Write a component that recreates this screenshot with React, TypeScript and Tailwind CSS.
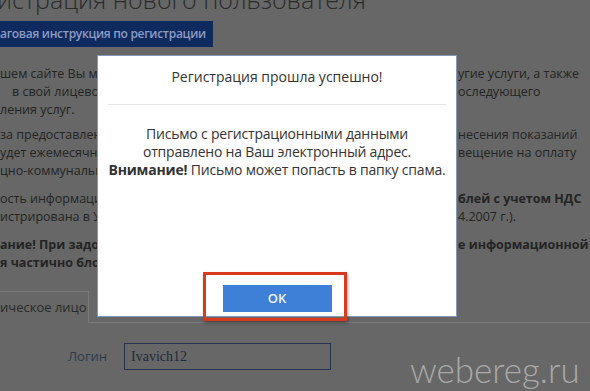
const paragraphs: {
  left: string;
  right?: string;
  leftBold?: boolean;
  rightBold?: boolean;
  indent?: boolean;
}[][] = [
  [
    { left: "шем сайте Вы можете", right: "угие услуги, а также" },
    { left: "в свой лицевой счёт", right: "оследующего", indent: true },
    { left: "ления услуг." },
  ],
  [
    { left: "за предоставление", right: "несения показаний" },
    { left: "удет ежемесячно", right: "вещение на оплату" },
    { left: "цно-коммунальных" },
  ],
  [
    { left: "ость информации", right: "блей с учетом НДС", rightBold: true },
    { left: "истрирована в Управлении", right: "4.2007 г.)." },
  ],
  [
    {
      left: "ание! При задолженности",
      right: "е информационной",
      leftBold: true,
      rightBold: true,
    },
    { left: "я частично блокирован", leftBold: true },
  ],
];

const Row: React.FC<{
  left: string;
  right?: string;
  leftBold?: boolean;
  rightBold?: boolean;
  indent?: boolean;
}> = ({ left, right, leftBold, rightBold, indent }) => (
  <div className="grid grid-cols-[97px_361px_1fr] whitespace-nowrap">
    <span
      className={`overflow-hidden ${indent ? "pl-[12px]" : ""} ${
        leftBold ? "font-bold" : ""
      }`}
    >
      {left}
    </span>
    <span />
    <span className={`overflow-hidden ${rightBold ? "font-bold" : ""}`}>
      {right}
    </span>
  </div>
);

export default function App() {
  return (
    <div className="relative h-[391px] w-[590px] overflow-hidden bg-[#666766] font-['Open_Sans','Noto_Sans',sans-serif] text-[#242424]">
      <h1 className="-ml-[3px] -mt-[17px] h-[32px] whitespace-nowrap text-[25px] font-light leading-[32px] text-[#2b2b2b]">
        истрация нового пользователя
      </h1>

      <div className="mt-[6px] flex h-[26px] w-[213px] items-center whitespace-nowrap bg-[#0f2a5e] pr-[10px] text-[12px] font-semibold tracking-[-0.3px] text-[#8b9cc4]">
        аговая инструкция по регистрации
      </div>

      <div className="mt-[18px] text-[12.5px] leading-[18px]">
        {paragraphs.map((rows, i) => (
          <div key={i} className={i === 0 ? "mb-[7px]" : "mb-[10px]"}>
            {rows.map((r, j) => (
              <Row key={j} {...r} />
            ))}
          </div>
        ))}
      </div>

      <div className="mt-[19px] flex">
        <div className="flex h-[32px] w-[89px] items-center border-r border-t border-[#7a7a7a] pt-[1px] text-[13px] text-[#2a2a2a]">
          ическое лицо
        </div>
        <div className="flex-1 border-b border-[#7a7a7a]" />
      </div>

      <div className="mt-[20px] flex items-center">
        <label className="w-[107px] text-right text-[13px] text-[#2c3a52]">
          Логин
        </label>
        <div className="ml-[17px] flex h-[27px] w-[207px] items-center border border-[#27344f] px-[6px] font-['Liberation_Serif',serif] text-[14px] text-[#1f2a3f]">
          Ivavich12
        </div>
      </div>

      {/* modal */}
      <div className="absolute left-[97px] top-[55px] flex h-[262px] w-[360px] flex-col border border-[#8499b8] bg-white text-[#333]">
        <div className="mx-[10px] h-[49px] border-b border-[#e6e6e6] pt-[11px] text-center text-[14px] leading-[20px]">
          Регистрация прошла успешно!
        </div>
        <div className="flex-1 pt-[20px] text-center text-[14px] leading-[18px] tracking-[-0.2px]">
          <p>Письмо с регистрационными данными</p>
          <p>отправлено на Ваш электронный адрес.</p>
          <p>
            <b>Внимание!</b> Письмо может попасть в папку спама.
          </p>
        </div>
        <div className="flex justify-center pb-[4px]">
          <button className="h-[27px] w-[109px] bg-[#3e80d8] text-[13px] font-semibold text-[#eef4fc]">
            OK
          </button>
        </div>
      </div>

      {/* red annotation frame */}
      <div className="absolute left-[203px] top-[272px] h-[49px] w-[144px] border-[3px] border-[#d8391f] shadow-[1px_2px_3px_rgba(0,0,0,0.35)]" />

      <div className="absolute left-[410px] top-[352px] whitespace-nowrap font-['Lato',sans-serif] text-[35px] font-light leading-none text-[#a9a9a9]">
        webereg.ru
      </div>
    </div>
  );
}
